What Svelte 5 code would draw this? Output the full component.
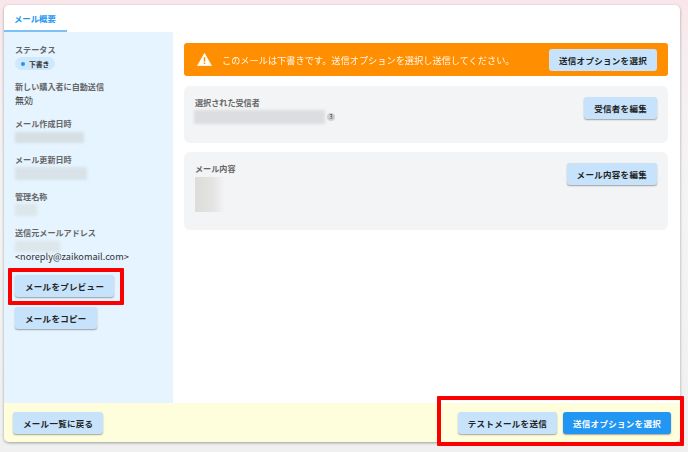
<script>
  const fields = [
    { label: '新しい購入者に自動送信', value: '無効' },
    { label: 'メール作成日時', blur: 'b-created' },
    { label: 'メール更新日時', blur: 'b-updated' },
    { label: '管理名称', blur: 'b-name' }
  ];
</script>

<div class="page">
  <div class="card">
    <div class="tabs"><div class="tab">メール概要</div></div>
    <div class="body">
      <aside class="side">
        <div class="field first">
          <div class="label">ステータス</div>
          <span class="chip"><i class="dot"></i>下書き</span>
        </div>
        {#each fields as f}
          <div class="field">
            <div class="label">{f.label}</div>
            {#if f.value}<div class="value">{f.value}</div>{:else}<div class="blur {f.blur}"></div>{/if}
          </div>
        {/each}
        <div class="field">
          <div class="label">送信元メールアドレス</div>
          <div class="blur b-from"></div>
          <div class="value email">&lt;noreply@zaikomail.com&gt;</div>
        </div>
        <div class="side-actions">
          <button class="btn light">メールをプレビュー</button>
          <button class="btn light">メールをコピー</button>
        </div>
      </aside>
      <main class="main">
        <div class="alert">
          <svg class="warn" width="15" height="13" viewBox="0 0 16 14" aria-hidden="true">
            <path d="M8 0.4 15.6 13.6H0.4Z" fill="#fff" stroke="#fff" stroke-width="0.6" stroke-linejoin="round" />
            <path d="M7.2 4.6h1.6v4.6H7.2zM7.2 10.2h1.6v1.6H7.2z" fill="#ff8f00" />
          </svg>
          <span class="alert-text">このメールは下書きです。送信オプションを選択し送信してください。</span>
          <button class="btn light flat">送信オプションを選択</button>
        </div>
        <section class="panel recipients">
          <div>
            <div class="label">選択された受信者</div>
            <div class="rec-row"><div class="blur b-rec"></div><span class="count">3</span></div>
          </div>
          <button class="btn light">受信者を編集</button>
        </section>
        <section class="panel content">
          <div>
            <div class="label">メール内容</div>
            <div class="blur b-content"></div>
          </div>
          <button class="btn light">メール内容を編集</button>
        </section>
      </main>
    </div>
    <footer class="foot">
      <button class="btn light">メール一覧に戻る</button>
      <div class="foot-right">
        <button class="btn light">テストメールを送信</button>
        <button class="btn primary">送信オプションを選択</button>
      </div>
    </footer>
  </div>
  <div class="mark mark-preview"></div>
  <div class="mark mark-send"></div>
</div>

<style>
  :global(body) {
    margin: 0;
    background: #f3f3f4;
  }
  .page {
    position: relative;
    width: 688px;
    height: 452px;
    padding: 5px 8px 10px 4px;
    box-sizing: border-box;
    overflow: hidden;
    background: linear-gradient(#f9e6ea 0, #f6eef0 60px, #f4f4f5 200px, #f0f0f1 100%);
    font-family: "Noto Sans CJK JP", "Noto Sans", sans-serif;
    color: #444;
  }
  .card {
    height: 437px;
    display: flex;
    flex-direction: column;
    background: #fff;
    border-radius: 5px;
    overflow: hidden;
    box-shadow: 0 1px 3px rgba(0, 0, 0, 0.35);
  }
  .tabs {
    height: 27px;
    flex: none;
  }
  .tab {
    width: 53px;
    height: 25px;
    padding-left: 10px;
    line-height: 27px;
    border-bottom: 2px solid #7cc0f5;
    font-size: 8.4px;
    font-weight: 700;
    color: #2196f3;
  }
  .body {
    flex: 1;
    display: flex;
    min-height: 0;
  }
  .side {
    width: 169px;
    flex: none;
    box-sizing: border-box;
    padding: 11px 0 0 11px;
    background: #e5f4ff;
  }
  .field {
    margin-top: 9.5px;
  }
  .field.first {
    margin-top: 0;
  }
  .label {
    font-size: 8.1px;
    line-height: 13px;
    font-weight: 700;
    color: #666;
  }
  .value {
    font-size: 9px;
    line-height: 15px;
    color: #333;
  }
  .email {
    margin-top: -3px;
    white-space: nowrap;
    font-size: 9.2px;
  }
  .chip {
    display: flex;
    width: fit-content;
    align-items: center;
    gap: 4px;
    height: 13px;
    margin: 1px 0;
    padding: 0 6px;
    border-radius: 7px;
    background: #cfe8fb;
    font-size: 6.8px;
    font-weight: 700;
    color: #333;
  }
  .dot {
    width: 4px;
    height: 4px;
    border-radius: 50%;
    background: #2196f3;
  }
  .blur {
    background: #dde6eb;
    filter: blur(1.5px);
  }
  .b-created {
    width: 69px;
    height: 11px;
    margin-top: 2px;
    background: #d5dfe4;
  }
  .b-updated {
    width: 72px;
    height: 13px;
    margin-top: 1.5px;
    background: #d8e2e8;
  }
  .b-name {
    width: 22px;
    height: 12px;
    margin-top: 1.5px;
  }
  .b-from {
    width: 45px;
    height: 11px;
    margin-top: 2.5px;
  }
  .side-actions {
    display: flex;
    flex-direction: column;
    align-items: flex-start;
    gap: 10px;
    margin-top: 11px;
  }
  .btn {
    height: 22px;
    padding: 0 10px;
    border: 0;
    border-radius: 3px;
    font-family: inherit;
    font-size: 8.5px;
    font-weight: 700;
    letter-spacing: 0.3px;
    white-space: nowrap;
    box-shadow: 0 1px 1.5px rgba(0, 0, 0, 0.35);
  }
  .light {
    background: #c6e3fb;
    color: #222;
  }
  .flat {
    box-shadow: none;
  }
  .primary {
    background: #2196f3;
    color: #fff;
  }
  .main {
    flex: 1;
    min-width: 0;
    box-sizing: border-box;
    padding: 11px 12px 0 11px;
  }
  .alert {
    display: flex;
    align-items: center;
    height: 33px;
    padding: 0 11px 0 13px;
    border-radius: 3px;
    background: #ff8f00;
  }
  .warn {
    flex: none;
  }
  .alert-text {
    flex: 1;
    margin-left: 10px;
    font-size: 9.2px;
    color: #fff;
    opacity: 0.92;
    white-space: nowrap;
  }
  .panel {
    display: flex;
    justify-content: space-between;
    align-items: flex-start;
    padding: 10px 11px 0 11px;
    border-radius: 6px;
    background: #f3f4f6;
  }
  .recipients {
    height: 47px;
    margin-top: 10px;
  }
  .content {
    height: 68px;
    margin-top: 9px;
  }
  .recipients .btn,
  .content .btn {
    margin-top: 1px;
  }
  .rec-row {
    display: flex;
    align-items: center;
    gap: 2px;
    margin-left: -1px;
    margin-top: 1px;
  }
  .b-rec {
    width: 131px;
    height: 14px;
    background: #dcdde0;
  }
  .count {
    width: 8px;
    height: 8px;
    border-radius: 50%;
    background: #d0d0d0;
    font-size: 6px;
    line-height: 8px;
    text-align: center;
    color: #333;
  }
  .b-content {
    width: 30px;
    height: 35px;
    margin-top: 2px;
    background: linear-gradient(90deg, #dcdcda, #e4e4e3 60%, #f3f4f6);
    filter: blur(0.6px);
  }
  .foot {
    flex: none;
    height: 39px;
    box-sizing: border-box;
    padding: 9px 9px 0 9px;
    display: flex;
    justify-content: space-between;
    align-items: flex-start;
    background: #fefedd;
  }
  .foot-right {
    display: flex;
    gap: 6px;
  }
  .mark {
    position: absolute;
    box-sizing: border-box;
    border: 4px solid #fa0000;
    border-radius: 1px;
  }
  .mark-preview {
    left: 8px;
    top: 268px;
    width: 116px;
    height: 37px;
  }
  .mark-send {
    left: 437px;
    top: 396px;
    width: 247px;
    height: 50px;
  }
</style>
